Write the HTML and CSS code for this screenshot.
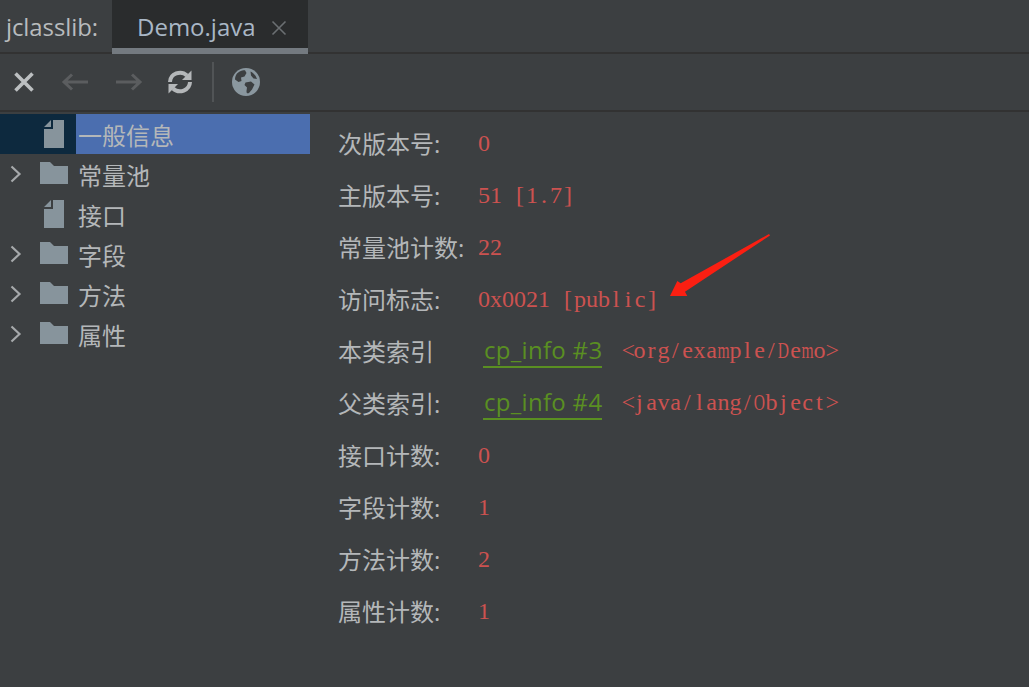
FILE: index.html
```html
<!DOCTYPE html>
<html lang="zh">
<head>
<meta charset="utf-8">
<title>jclasslib</title>
<link rel="stylesheet" href="styles.css">
</head>
<body>
<div class="app">
  <header class="tabbar">
    <span class="app-name">jclasslib:</span>
    <div class="tab">
      <span class="tab-title">Demo.java</span>
      <svg class="tab-close" width="16" height="16" viewBox="0 0 16 16"><path d="M1.5 1.5 14.5 14.5M14.5 1.5 1.5 14.5" stroke="#6b6f72" stroke-width="1.6" fill="none"/></svg>
    </div>
  </header>
  <nav class="toolbar">
    <svg class="tool tool-x" width="22" height="22" viewBox="0 0 22 22"><path d="M2.5 2.5 19.5 19.5M19.5 2.5 2.5 19.5" stroke="#bcbfc1" stroke-width="3.6" fill="none"/></svg>
    <svg class="tool tool-back" width="28" height="18" viewBox="0 0 28 18"><path d="M27 9H3M11 1.5 3 9l8 7.5" stroke="#5b5d5f" stroke-width="3" fill="none"/></svg>
    <svg class="tool tool-fwd" width="28" height="18" viewBox="0 0 28 18"><path d="M1 9H25M17 1.5 25 9l-8 7.5" stroke="#5b5d5f" stroke-width="3" fill="none"/></svg>
    <svg class="tool tool-refresh" width="26" height="26" viewBox="0 0 26 26"><path d="M3 13A10 9.500 0 0 1 20 6.500" stroke="#b4b7b9" stroke-width="4" fill="none"/><path d="M24.500 1.500V11H15Z" fill="#b4b7b9"/><path d="M23 13A10 9.500 0 0 1 6 19.500" stroke="#b4b7b9" stroke-width="4" fill="none"/><path d="M1.500 24.500V15H11Z" fill="#b4b7b9"/></svg>
    <span class="tool-sep"></span>
    <svg class="tool tool-globe" width="28" height="28" viewBox="0 0 28 28"><circle cx="14" cy="14" r="14" fill="#8a979f"/><path d="M5 5.500C8 2.800 11 2.300 13 2.300L14.500 5 12.500 8.500 9 9.500 9.500 13 6.500 14 3 11.500C3 9 3.800 7 5 5.500ZM13.500 14.500 19 13.500 22.500 16.500 20 21.500 17 25C15 25.800 14.500 25 14.500 23L15 19.500 12.500 17ZM18.500 3.500C21 4.500 24 7.500 25 11L21.500 10.500 19 7.500Z" fill="#3c3f41"/></svg>
  </nav>
  <main class="content">
    <aside class="tree">
      <div class="node selected">
        <span class="marker"></span>
        <svg class="ic-file" width="20" height="28" viewBox="0 0 20 28"><path d="M9 0H20V28H0V9H9Z M7 0V7H0Z" fill="#87949c"/></svg>
        <span class="node-label">一般信息</span>
      </div>
      <div class="node">
        <svg class="chev" width="12" height="18" viewBox="0 0 12 18"><path d="M1.500 1.500 9.500 9l-8 7.500" stroke="#a6a9ab" stroke-width="2.200" fill="none"/></svg>
        <svg class="ic-folder" width="28" height="22" viewBox="0 0 28 22"><path d="M0 0H10L14 4H28V22H0Z" fill="#87949c"/></svg>
        <span class="node-label">常量池</span>
      </div>
      <div class="node">
        <span class="marker"></span>
        <svg class="ic-file" width="20" height="28" viewBox="0 0 20 28"><path d="M9 0H20V28H0V9H9Z M7 0V7H0Z" fill="#87949c"/></svg>
        <span class="node-label">接口</span>
      </div>
      <div class="node">
        <svg class="chev" width="12" height="18" viewBox="0 0 12 18"><path d="M1.500 1.500 9.500 9l-8 7.500" stroke="#a6a9ab" stroke-width="2.200" fill="none"/></svg>
        <svg class="ic-folder" width="28" height="22" viewBox="0 0 28 22"><path d="M0 0H10L14 4H28V22H0Z" fill="#87949c"/></svg>
        <span class="node-label">字段</span>
      </div>
      <div class="node">
        <svg class="chev" width="12" height="18" viewBox="0 0 12 18"><path d="M1.500 1.500 9.500 9l-8 7.500" stroke="#a6a9ab" stroke-width="2.200" fill="none"/></svg>
        <svg class="ic-folder" width="28" height="22" viewBox="0 0 28 22"><path d="M0 0H10L14 4H28V22H0Z" fill="#87949c"/></svg>
        <span class="node-label">方法</span>
      </div>
      <div class="node">
        <svg class="chev" width="12" height="18" viewBox="0 0 12 18"><path d="M1.500 1.500 9.500 9l-8 7.500" stroke="#a6a9ab" stroke-width="2.200" fill="none"/></svg>
        <svg class="ic-folder" width="28" height="22" viewBox="0 0 28 22"><path d="M0 0H10L14 4H28V22H0Z" fill="#87949c"/></svg>
        <span class="node-label">属性</span>
      </div>
    </aside>
    <section class="info">
      <div class="row"><span class="key">次版本号:</span><span class="val">0</span></div>
      <div class="row"><span class="key">主版本号:</span><span class="val">51 [1.7]</span></div>
      <div class="row"><span class="key">常量池计数:</span><span class="val">22</span></div>
      <div class="row"><span class="key">访问标志:</span><span class="val">0x0021 [public]</span></div>
      <div class="row"><span class="key">本类索引</span><a class="link">cp_info #3</a><span class="val ref">&lt;org/example/Demo&gt;</span></div>
      <div class="row"><span class="key">父类索引:</span><a class="link">cp_info #4</a><span class="val ref">&lt;java/lang/Object&gt;</span></div>
      <div class="row"><span class="key">接口计数:</span><span class="val">0</span></div>
      <div class="row"><span class="key">字段计数:</span><span class="val">1</span></div>
      <div class="row"><span class="key">方法计数:</span><span class="val">2</span></div>
      <div class="row"><span class="key">属性计数:</span><span class="val">1</span></div>
    </section>
  </main>
  <svg class="callout" width="104" height="66" viewBox="0 0 104 66"><path d="M3 62 10.300 47 13.700 49.300 102 0 103 1.500 18 57.700 20.300 62Z" fill="#fb1f12"/></svg>
</div>
<script src="script.js"></script>
</body>
</html>
```

FILE: styles.css
```css
html, body {
  margin: 0;
  padding: 0;
  background: #3c3f41;
}
.app {
  position: relative;
  width: 1029px;
  height: 687px;
  overflow: hidden;
  background: #3c3f41;
  color: #b4b7b9;
  font-family: "Open Sans", "Noto Sans CJK SC", sans-serif;
}
.tabbar {
  display: flex;
  height: 52px;
  border-bottom: 2px solid #323232;
}
.app-name {
  width: 112px;
  padding-left: 6px;
  box-sizing: border-box;
  font-size: 24px;
  line-height: 54px;
  letter-spacing: -0.1px;
  color: #b8bbbd;
  white-space: nowrap;
}
.tab {
  display: flex;
  align-items: center;
  width: 196px;
  height: 54px;
  padding: 4px 0 0 25px;
  box-sizing: border-box;
  background: #2a2c2d;
  border-bottom: 6px solid #747a80;
}
.tab-title {
  font-size: 24px;
  color: #a9b7c6;
  white-space: nowrap;
}
.tab-close {
  margin-left: 15px;
  margin-top: 4px;
}
.toolbar {
  display: flex;
  align-items: center;
  height: 56px;
  border-bottom: 2px solid #323232;
}
.tool { flex: none; }
.tool-x { margin-left: 13px; }
.tool-back { margin-left: 26px; }
.tool-fwd { margin-left: 26px; }
.tool-refresh { margin-left: 24px; }
.tool-sep {
  width: 2px;
  height: 40px;
  margin-left: 19px;
  background: #515456;
}
.tool-globe { margin-left: 18px; }
.content {
  display: flex;
  padding-top: 2px;
}
.tree {
  width: 310px;
  flex: none;
}
.node {
  display: flex;
  align-items: center;
  height: 40px;
  padding-left: 10px;
}
.node-label {
  margin-left: 10px;
  font-size: 24px;
  color: #b4b7b9;
  white-space: nowrap;
}
.ic-file + .node-label { margin-left: 14px; }
.marker { width: 12px; flex: none; }
.chev { flex: none; margin-top: -1px; }
.ic-file { margin-left: 22px; flex: none; }
.ic-folder { margin-left: 18px; flex: none; margin-top: -2px; }
.node.selected {
  background: linear-gradient(to right, #0d293e 0 76px, #4b6eaf 76px);
}
.info {
  flex: 1;
  padding: 2px 0 0 28px;
}
.row {
  display: flex;
  align-items: center;
  height: 52px;
}
.key {
  width: 140px;
  flex: none;
  font-size: 24px;
  color: #b4b7b9;
  white-space: nowrap;
}
.val {
  margin-top: 2px;
  font-family: "Liberation Serif", "Noto Sans CJK SC", serif;
  font-size: 24px;
  line-height: 30px;
  color: #cc5250;
  white-space: pre;
}
.ch {
  display: inline-block;
  width: 12px;
  text-align: center;
}
.wide {
  font-size: 15.5px;
  transform: scaleY(1.5);
  transform-origin: 50% 20.300px;
}
.link {
  margin-left: 5px;
  margin-top: 2px;
  padding-left: 1px;
  font-size: 24px;
  line-height: 32px;
  letter-spacing: 0.3px;
  color: #5a8f22;
  border-bottom: 2px solid #5a8f22;
  white-space: nowrap;
}
.ref { margin-left: 19px; }
.callout {
  position: absolute;
  left: 667px;
  top: 234px;
}
```

FILE: script.js
```js
// The values are drawn in a fixed 12px cell per character, as in the original's monospaced serif.
document.querySelectorAll('.val').forEach(function (val) {
  var text = val.textContent;
  val.textContent = '';
  Array.from(text).forEach(function (c) {
    var cell = document.createElement('span');
    cell.className = /[mDO]/.test(c) ? 'ch wide' : 'ch';
    cell.textContent = c;
    val.appendChild(cell);
  });
});
```
